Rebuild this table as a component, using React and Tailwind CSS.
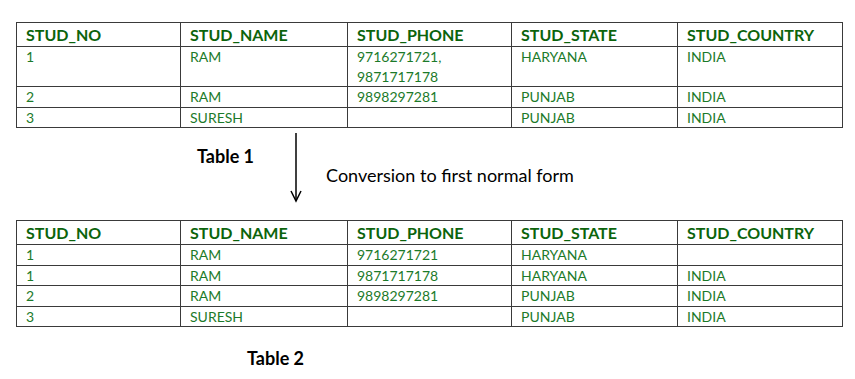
const font = { fontFamily: "Lato, 'Open Sans', sans-serif" };

const cols = ["STUD_NO", "STUD_NAME", "STUD_PHONE", "STUD_STATE", "STUD_COUNTRY"];
const widths = ["w-[164px]", "w-[167px]", "w-[164px]", "w-[166px]", "w-[165px]"];

const table1 = [
  ["1", "RAM", ["9716271721,", "9871717178"], "HARYANA", "INDIA"],
  ["2", "RAM", "9898297281", "PUNJAB", "INDIA"],
  ["3", "SURESH", "", "PUNJAB", "INDIA"],
];

const table2 = [
  ["1", "RAM", "9716271721", "HARYANA", ""],
  ["1", "RAM", "9871717178", "HARYANA", "INDIA"],
  ["2", "RAM", "9898297281", "PUNJAB", "INDIA"],
  ["3", "SURESH", "", "PUNJAB", "INDIA"],
];

function StudTable({ rows }) {
  return (
    <table className="table-fixed border-collapse border border-[#8a8a8a]">
      <thead>
        <tr>
          {cols.map((c, i) => (
            <th
              key={c}
              className={`${widths[i]} h-[24px] border border-[#3a3a3a] pl-[9px] text-left text-[16px] font-bold leading-[22px] text-[#0c640c]`}
            >
              {c}
            </th>
          ))}
        </tr>
      </thead>
      <tbody>
        {rows.map((r, ri) => (
          <tr key={ri}>
            {r.map((v, ci) => (
              <td
                key={ci}
                className="border border-[#3a3a3a] pl-[9px] align-top text-[14px] leading-[19.5px] text-[#1c7a2a]"
              >
                {Array.isArray(v) ? v.map((l) => <div key={l}>{l}</div>) : v}
              </td>
            ))}
          </tr>
        ))}
      </tbody>
    </table>
  );
}

export default function App() {
  return (
    <div className="h-[379px] w-[855px] bg-white pl-[16px] pt-[22px]" style={font}>
      <StudTable rows={table1} />

      <div className="flex h-[92px] items-start">
        <div className="ml-[181px] mt-[17px] text-[18px] font-bold leading-[22px] text-black">Table 1</div>
        <svg className="ml-[36px] mt-[5px]" width="12" height="70" viewBox="0 0 12 70">
          <line x1="6" y1="0" x2="6" y2="68" stroke="black" strokeWidth="1.5" />
          <polyline points="1,58 6,68 11,58" fill="none" stroke="black" strokeWidth="1.5" />
        </svg>
        <div className="ml-[24px] mt-[36px] text-[18px] leading-[22px] text-black">Conversion to first normal form</div>
      </div>

      <StudTable rows={table2} />

      <div className="ml-[231px] mt-[20px] text-[18px] font-bold leading-[22px] text-black">Table 2</div>
    </div>
  );
}
